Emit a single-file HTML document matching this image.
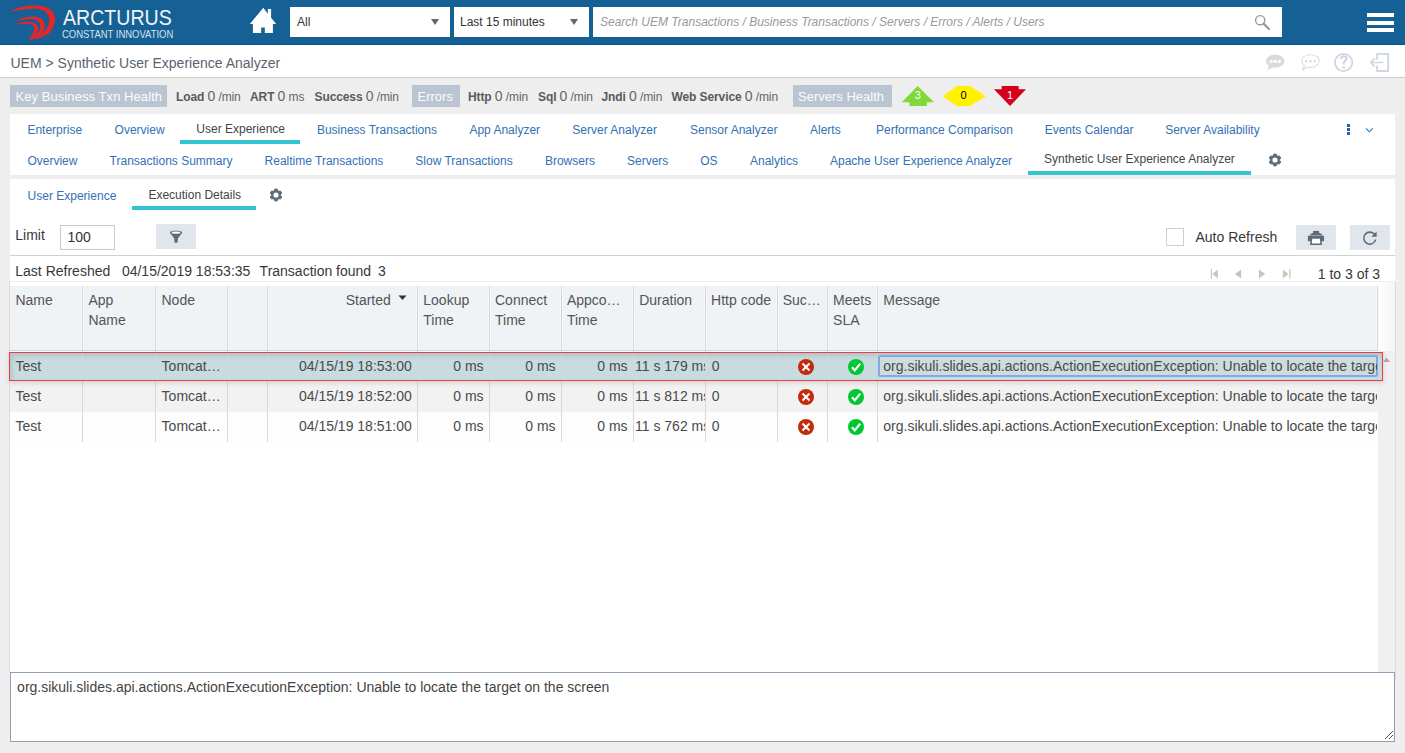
<!DOCTYPE html>
<html><head><meta charset="utf-8">
<style>
*{box-sizing:border-box;margin:0;padding:0}
html,body{width:1405px;height:753px;overflow:hidden;background:#eeeeee;font-family:"Liberation Sans",sans-serif;position:relative}
.a{position:absolute}
.t{position:absolute;line-height:1;white-space:nowrap}
#hdr{left:0;top:0;width:1405px;height:45px;background:#156195;border-bottom:1px solid #08528c}
.sel{background:#fff;height:30px;top:7px}
.crumb{left:0;top:45px;width:1405px;height:33px;background:#fff;border-bottom:1px solid #cfcbcb}
.sbox{top:85px;height:22px;background:#bbc4d1;color:#fbfcfd;font-size:13px}
.st{font-size:12px;color:#666;top:88.9px;letter-spacing:-0.1px}
.st b{color:#5a5a5a}
.st b{font-size:12px}
.panel{background:#fff}
.tab{font-size:12px;color:#3371b4}
.act{color:#454545}
.ul{background:#35c3d0;height:4px}
.lbl{font-size:14px;color:#383838}
.btn{background:#e1e5ec}
.hd{font-size:14px;color:#555}
.cell{font-size:14px;color:#4a4a4a}
.tb{position:relative;padding:0 16px;height:30px}
.tb span{display:block;line-height:1;white-space:nowrap;margin-top:10px}
.tb span.act{margin-top:8.8px}
#row2 .tb span{margin-top:9.6px}
#row2 .tb span.act{margin-top:8.3px}
.tb .ul{position:absolute;left:0;right:0;top:26px}
.vl{position:absolute;width:1px;background:#d9dcdf}
</style></head><body>
<!-- header -->
<div id="hdr" class="a">
  <svg class="a" style="left:0;top:0" width="60" height="45" viewBox="0 0 60 45"><path fill="#e8262a" d="M9.40,11.80 C11.38,11.00 17.03,8.07 21.30,7.00 C25.57,5.93 30.92,5.38 35.00,5.40 C39.08,5.42 42.90,6.07 45.80,7.10 C48.70,8.13 50.88,9.73 52.40,11.60 C53.92,13.47 54.52,16.55 54.90,18.30 C55.28,20.05 55.07,20.55 54.70,22.10 C54.33,23.65 53.50,25.90 52.70,27.60 C51.90,29.30 51.12,30.98 49.90,32.30 C48.68,33.62 47.38,34.48 45.40,35.50 C43.42,36.52 40.82,37.68 38.00,38.40 C35.18,39.12 30.08,39.57 28.50,39.80 C29.52,39.58 32.58,39.25 34.60,38.50 C36.62,37.75 39.07,36.33 40.60,35.30 C42.13,34.27 42.68,33.58 43.80,32.30 C44.92,31.02 46.40,29.30 47.30,27.60 C48.20,25.90 48.88,23.53 49.20,22.10 C49.52,20.67 49.47,20.25 49.20,19.00 C48.93,17.75 48.62,16.00 47.60,14.60 C46.58,13.20 45.20,11.63 43.10,10.60 C41.00,9.57 38.63,8.52 35.00,8.40 C31.37,8.28 25.57,9.33 21.30,9.90 C17.03,10.47 11.38,11.48 9.40,11.80Z"/><path fill="#e8262a" d="M15.30,21.00 C16.75,20.45 21.18,18.45 24.00,17.70 C26.82,16.95 29.78,16.52 32.20,16.50 C34.62,16.48 36.73,17.02 38.50,17.60 C40.27,18.18 41.83,19.10 42.80,20.00 C43.77,20.90 44.00,21.73 44.30,23.00 C44.60,24.27 44.83,26.05 44.60,27.60 C44.37,29.15 43.70,30.98 42.90,32.30 C42.10,33.62 41.20,34.45 39.80,35.50 C38.40,36.55 36.38,37.88 34.50,38.60 C32.62,39.32 29.50,39.60 28.50,39.80 C29.05,39.60 30.57,39.33 31.80,38.60 C33.03,37.87 34.80,36.45 35.90,35.40 C37.00,34.35 37.65,33.63 38.40,32.30 C39.15,30.97 40.25,28.98 40.40,27.40 C40.55,25.82 39.90,23.97 39.30,22.80 C38.70,21.63 37.98,21.02 36.80,20.40 C35.62,19.78 34.33,19.18 32.20,19.10 C30.07,19.02 26.82,19.58 24.00,19.90 C21.18,20.22 16.75,20.82 15.30,21.00Z"/><path fill="#e8262a" d="M15.00,24.60 C16.05,24.27 19.15,23.07 21.30,22.60 C23.45,22.13 25.95,21.83 27.90,21.80 C29.85,21.77 31.57,21.95 33.00,22.40 C34.43,22.85 35.63,23.63 36.50,24.50 C37.37,25.37 38.05,26.30 38.20,27.60 C38.35,28.90 37.90,30.98 37.40,32.30 C36.90,33.62 36.13,34.48 35.20,35.50 C34.27,36.52 32.92,37.68 31.80,38.40 C30.68,39.12 29.05,39.57 28.50,39.80 C28.68,39.55 29.13,39.02 29.60,38.30 C30.07,37.58 30.67,36.50 31.30,35.50 C31.93,34.50 32.88,33.45 33.40,32.30 C33.92,31.15 34.33,29.58 34.40,28.60 C34.47,27.62 34.28,27.07 33.80,26.40 C33.32,25.73 32.48,25.05 31.50,24.60 C30.52,24.15 29.60,23.82 27.90,23.70 C26.20,23.58 23.45,23.75 21.30,23.90 C19.15,24.05 16.05,24.48 15.00,24.60Z"/></svg>
  <div class="t" style="left:63px;top:6.6px;font-size:22.5px;color:#eef3f8;transform:scaleX(0.87);transform-origin:0 0">ARCTURUS</div>
  <div class="t" style="left:62px;top:29px;font-size:11px;color:#d5e1ec;transform:scaleX(0.86);transform-origin:0 0">CONSTANT INNOVATION</div>
  <svg class="a" style="left:248px;top:6px" width="30" height="29" viewBox="0 0 30 29">
    <path fill="#fff" d="M15.3,1.8 L1.9,17.9 L4.9,17.9 L4.9,27 L13.2,27 L13.2,21.5 L16.8,21.5 L16.8,27 L24.9,27 L24.9,17.9 L28.2,17.9 L23.1,11.8 L23.1,3 L19.8,3 L19.8,7.8 Z"/>
  </svg>
  <div class="a sel" style="left:290px;width:160px"></div>
  <div class="t" style="left:297px;top:16px;font-size:12px;color:#333">All</div>
  <svg class="a" style="left:431px;top:19px" width="8" height="6"><path d="M0,0 L8,0 L4,6Z" fill="#666"/></svg>
  <div class="a sel" style="left:454px;width:135px"></div>
  <div class="t" style="left:460px;top:16px;font-size:12px;color:#333">Last 15 minutes</div>
  <svg class="a" style="left:570px;top:19px" width="8" height="6"><path d="M0,0 L8,0 L4,6Z" fill="#666"/></svg>
  <div class="a sel" style="left:593px;width:689px"></div>
  <div class="t" style="left:600px;top:16px;font-size:12px;color:#999;font-style:italic">Search UEM Transactions / Business Transactions / Servers / Errors / Alerts / Users</div>
  <svg class="a" style="left:1254px;top:14px" width="17" height="17" viewBox="0 0 17 17">
    <circle cx="6.2" cy="6.2" r="4.6" fill="none" stroke="#999" stroke-width="1.4"/>
    <path d="M9.6,9.6 L15,15" stroke="#999" stroke-width="2.2" stroke-linecap="round"/>
  </svg>
  <div class="a" style="left:1367px;top:13px;width:27px;height:4px;background:#fff"></div>
  <div class="a" style="left:1367px;top:20.5px;width:27px;height:4px;background:#fff"></div>
  <div class="a" style="left:1367px;top:28px;width:27px;height:4px;background:#fff"></div>
</div>
<!-- breadcrumb -->
<div class="a crumb"></div>
<div class="t" style="left:10.5px;top:56px;font-size:14px;color:#5a6270">UEM &gt; Synthetic User Experience Analyzer</div>


<!-- breadcrumb icons -->
<svg class="a" style="left:1260px;top:48px" width="140" height="28" viewBox="1260 48 140 28">
 <g fill="#dadada">
  <ellipse cx="1275.2" cy="61.1" rx="9.2" ry="6.6"/>
  <path d="M1269,65 L1267.3,70.2 L1274,66.8 Z"/>
 </g>
 <g fill="#fff"><circle cx="1271.2" cy="61.3" r="1.6"/><circle cx="1275.2" cy="61.3" r="1.6"/><circle cx="1279.3" cy="61.3" r="1.6"/></g>
 <path d="M1304.5,65.5 C1301,63 1301.1,58.5 1304,56.6 C1308,53.8 1314.5,54.2 1317.5,57 C1320.5,59.8 1319.5,64.5 1315,66.6 C1312.5,67.7 1309,67.8 1306.5,67.2 L1302.3,70.3 Z" fill="none" stroke="#dedede" stroke-width="1.1"/>
 <g fill="#cfcfcf"><circle cx="1306.2" cy="61.3" r="1.1"/><circle cx="1310.5" cy="61.3" r="1.1"/><circle cx="1314.7" cy="61.3" r="1.1"/></g>
 <circle cx="1343.6" cy="62.5" r="8.7" fill="none" stroke="#cdd6e2" stroke-width="1.8"/>
 <path d="M1340.8,58.8 C1341,56.8 1342.2,56.2 1343.7,56.2 C1345.5,56.2 1346.6,57.3 1346.6,58.6 C1346.6,60.6 1343.7,61 1343.6,63.6 L1343.6,64.6" fill="none" stroke="#cdd6e2" stroke-width="2"/>
 <rect x="1342.3" y="66.6" width="2.6" height="1.8" fill="#cdd6e2"/>
 <path d="M1377.1,59.7 L1377.1,53.8 L1388.2,53.8 L1388.2,71 L1377.1,71 L1377.1,65.3" fill="none" stroke="#cdd6e2" stroke-width="1.8"/>
 <path d="M1383.2,62.5 L1371,62.5 M1374.8,58.4 L1370.8,62.5 L1374.8,66.6" fill="none" stroke="#cdd6e2" stroke-width="1.7"/>
</svg>
<!-- stats -->
<div class="a sbox" style="left:10px;width:157px"></div>
<div class="t" style="left:15.5px;top:89.7px;font-size:13px;color:#fbfcfd;letter-spacing:0.07px">Key Business Txn Health</div>
<div class="t st" style="left:176px"><b>Load</b> <span style="font-size:14px">0</span> /min</div>
<div class="t st" style="left:250px"><b>ART</b> <span style="font-size:14px">0</span> ms</div>
<div class="t st" style="left:314.5px"><b>Success</b> <span style="font-size:14px">0</span> /min</div>
<div class="a sbox" style="left:412px;width:48px"></div>
<div class="t" style="left:417.5px;top:89.7px;font-size:13px;color:#fbfcfd">Errors</div>
<div class="t st" style="left:468px"><b>Http</b> <span style="font-size:14px">0</span> /min</div>
<div class="t st" style="left:538px"><b>Sql</b> <span style="font-size:14px">0</span> /min</div>
<div class="t st" style="left:601.5px"><b>Jndi</b> <span style="font-size:14px">0</span> /min</div>
<div class="t st" style="left:671.5px"><b>Web Service</b> <span style="font-size:14px">0</span> /min</div>
<div class="a sbox" style="left:793px;width:99px"></div>
<div class="t" style="left:798px;top:89.7px;font-size:13px;color:#fbfcfd">Servers Health</div>
<svg class="a" style="left:900px;top:84px" width="130" height="24" viewBox="900 84 130 24">
  <path fill="#7fd93a" d="M917.7,86 L934,102.3 L926.8,102.3 L926.8,106 L909.5,106 L909.5,102.3 L901.8,102.3 Z"/>
  <path fill="#fff200" d="M957,86 L970,86 L986,96.3 L970,106 L957,106 L942.8,96.3 Z"/>
  <path fill="#d7001c" d="M1001.7,86 L1018.6,86 L1018.6,89.3 L1026,89.3 L1010,106 L994,89.3 L1001.7,89.3 Z"/>
  <text x="917.7" y="98.5" font-size="11" fill="#fff" text-anchor="middle" font-family="Liberation Sans">3</text>
  <text x="963.5" y="98.5" font-size="11" fill="#000" text-anchor="middle" font-family="Liberation Sans">0</text>
  <text x="1010" y="98.5" font-size="11" fill="#fff" text-anchor="middle" font-family="Liberation Sans">1</text>
</svg>

<!-- panel 1 tabs -->
<div class="a panel" style="left:10px;top:114px;width:1385px;height:61px"></div>
<div id="tabs">
<div class="t tab" style="left:27.4px;top:124px">Enterprise</div>
<div class="t tab" style="left:114.6px;top:124px">Overview</div>
<div class="t tab act" style="left:196.3px;top:122.8px">User Experience</div>
<div class="t tab" style="left:316.9px;top:124px">Business Transactions</div>
<div class="t tab" style="left:469.4px;top:124px">App Analyzer</div>
<div class="t tab" style="left:572.3px;top:124px">Server Analyzer</div>
<div class="t tab" style="left:690px;top:124px">Sensor Analyzer</div>
<div class="t tab" style="left:810px;top:124px">Alerts</div>
<div class="t tab" style="left:876.1px;top:124px">Performance Comparison</div>
<div class="t tab" style="left:1044.7px;top:124px">Events Calendar</div>
<div class="t tab" style="left:1165.2px;top:124px">Server Availability</div>
<div class="t tab" style="left:27.4px;top:154.6px">Overview</div>
<div class="t tab" style="left:109.6px;top:154.6px">Transactions Summary</div>
<div class="t tab" style="left:264.6px;top:154.6px">Realtime Transactions</div>
<div class="t tab" style="left:415.3px;top:154.6px">Slow Transactions</div>
<div class="t tab" style="left:544.9px;top:154.6px">Browsers</div>
<div class="t tab" style="left:627px;top:154.6px">Servers</div>
<div class="t tab" style="left:700.2px;top:154.6px">OS</div>
<div class="t tab" style="left:750px;top:154.6px">Analytics</div>
<div class="t tab" style="left:830px;top:154.6px">Apache User Experience Analyzer</div>
<div class="t tab act" style="left:1044.1px;top:153.3px">Synthetic User Experience Analyzer</div>
<div class="a ul" style="left:180px;top:140px;width:120px"></div>
<div class="a ul" style="left:1028px;top:171px;width:223px"></div>
</div>
<!-- panel 2 -->
<div class="a panel" style="left:10px;top:179px;width:1385px;height:494px"></div>

<!-- panel1 right icons -->
<div class="a" style="left:1347px;top:124px;width:3px;height:3px;background:#2562b0"></div>
<div class="a" style="left:1347px;top:128px;width:3px;height:3px;background:#2562b0"></div>
<div class="a" style="left:1347px;top:132px;width:3px;height:3px;background:#2562b0"></div>
<svg class="a" style="left:1365px;top:126px" width="9" height="8" viewBox="0 0 9 8"><path d="M1,2.3 L4.4,5.8 L7.8,2.3" fill="none" stroke="#2f74c4" stroke-width="1.1"/></svg>
<svg class="a" style="left:1267px;top:152px" width="16" height="16" viewBox="-8 -8 16 16"><path d="M-1.87,-4.20 L-1.14,-5.89 L1.14,-5.89 L1.87,-4.20 L2.70,-3.72 L4.53,-3.94 L5.67,-1.95 L4.57,-0.48 L4.57,0.48 L5.67,1.95 L4.53,3.94 L2.70,3.72 L1.87,4.20 L1.14,5.89 L-1.14,5.89 L-1.87,4.20 L-2.70,3.72 L-4.53,3.94 L-5.67,1.95 L-4.57,0.48 L-4.57,-0.48 L-5.67,-1.95 L-4.53,-3.94 L-2.70,-3.72Z" fill="#5f6b7a" stroke="#5f6b7a" stroke-width="1" stroke-linejoin="round"/><circle r="2.6" fill="#fff"/></svg>

<!-- panel 2 content -->
<div class="t tab" style="left:27.6px;top:189.5px">User Experience</div>
<div class="t tab act" style="left:148.4px;top:188.8px">Execution Details</div>
<div class="a ul" style="left:132px;top:206px;width:124px"></div>
<svg class="a" style="left:268px;top:187px" width="16" height="16" viewBox="-8 -8 16 16"><path d="M-1.87,-4.20 L-1.14,-5.89 L1.14,-5.89 L1.87,-4.20 L2.70,-3.72 L4.53,-3.94 L5.67,-1.95 L4.57,-0.48 L4.57,0.48 L5.67,1.95 L4.53,3.94 L2.70,3.72 L1.87,4.20 L1.14,5.89 L-1.14,5.89 L-1.87,4.20 L-2.70,3.72 L-4.53,3.94 L-5.67,1.95 L-4.57,0.48 L-4.57,-0.48 L-5.67,-1.95 L-4.53,-3.94 L-2.70,-3.72Z" fill="#5f6b7a" stroke="#5f6b7a" stroke-width="1" stroke-linejoin="round"/><circle r="2.6" fill="#fff"/></svg>
<div class="t lbl" style="left:15.3px;top:228.2px">Limit</div>
<div class="a" style="left:60px;top:225px;width:55px;height:25px;border:1px solid #c9c9c9;background:#fff"></div>
<div class="t lbl" style="left:67.5px;top:229.6px;color:#333">100</div>
<div class="a btn" style="left:156px;top:224px;width:40px;height:25px"></div>
<svg class="a" style="left:166px;top:228px" width="20" height="18" viewBox="166 228 20 18">
 <path fill="#5f6b7a" d="M169.9,232.8 C169.9,230.2 182.2,230.2 182.2,232.8 L177.8,238.6 L177.8,241.2 C177.8,243.4 174.3,243.4 174.3,241.2 L174.3,238.6 Z"/>
 <ellipse cx="176" cy="232.7" rx="4.4" ry="1.15" fill="#fff"/>
</svg>
<div class="a" style="left:1166px;top:228px;width:18px;height:18px;border:1px solid #cfcfcf;background:#fff"></div>
<div class="t lbl" style="left:1195.5px;top:230.3px">Auto Refresh</div>
<div class="a btn" style="left:1296px;top:225px;width:40px;height:25px"></div>
<svg class="a" style="left:1305px;top:229px" width="22" height="18" viewBox="1305 229 22 18">
 <g fill="#5f6b7a">
 <rect x="1313.1" y="230.9" width="6" height="2.4"/>
 <path d="M1309.6,235.4 C1310.5,233.6 1312.5,232.8 1314,232.8 L1318.2,232.8 C1319.7,232.8 1321.8,233.6 1322.6,235.4 Z"/>
 <rect x="1307.9" y="235.8" width="16.1" height="5.4"/>
 <path d="M1310,245.1 L1310.9,237.7 L1321.4,237.7 L1322,245.1 Z"/>
 </g>
 <path d="M1311.8,243.6 L1312.3,238.8 L1319.9,238.8 L1320.3,243.6 Z" fill="#fff"/>
</svg>
<div class="a btn" style="left:1350px;top:225px;width:40px;height:25px"></div>
<svg class="a" style="left:1362px;top:230px" width="16" height="16" viewBox="0 0 16 16">
 <path d="M12.6,4.6 A6,6 0 1 0 13.6,9.6" fill="none" stroke="#5f6b7a" stroke-width="1.6"/>
 <path d="M14.6,1.5 L14.6,6.8 L9.3,6.8 Z" fill="#5f6b7a"/>
</svg>
<div class="a" style="left:10px;top:255px;width:1385px;height:1px;background:#d0d0d0"></div>
<div class="t lbl" style="left:15.3px;top:264.1px">Last Refreshed</div>
<div class="t lbl" style="left:121.9px;top:264.1px">04/15/2019 18:53:35</div>
<div class="t lbl" style="left:259.6px;top:264.1px">Transaction found</div>
<div class="t lbl" style="left:378px;top:264.1px">3</div>
<svg class="a" style="left:1205px;top:266px" width="90" height="16" viewBox="1205 266 90 16">
 <g fill="#c9c5bd">
 <rect x="1210.8" y="269" width="1.2" height="9.6"/><path d="M1217.9,269.4 L1217.9,278.4 L1212.4,273.9 Z"/>
 <path d="M1241.2,269.4 L1241.2,278.4 L1234.9,273.9 Z"/>
 <path d="M1259,269.4 L1259,278.4 L1265.2,273.9 Z"/>
 <path d="M1282.9,269.4 L1282.9,278.4 L1288.6,273.9 Z"/><rect x="1289.3" y="269" width="1.2" height="9.6"/>
 </g>
</svg>
<div class="t lbl" style="left:1317.8px;top:266.6px">1 to 3 of 3</div>

<!-- grid -->
<div class="a" style="left:9px;top:282px;width:1px;height:390px;background:#dcdcdc"></div>
<div class="a" style="left:1395px;top:282px;width:1px;height:398px;background:#dcdcdc"></div>

<div class="a" style="left:10px;top:281px;width:1385px;height:1px;background:#eeeeee"></div>
<div class="a" style="left:10px;top:286px;width:1368px;height:64px;background:#eff3f6"></div>
<div class="a" style="left:1378px;top:282px;width:17px;height:69px;background:linear-gradient(90deg,#ffffff,#f4f4f4)"></div>
<div class="a" style="left:10px;top:350px;width:1368px;height:1px;background:#d6d6d6"></div>
<div class="a" style="left:1378px;top:351px;width:17px;height:321px;background:#f0f0f0"></div>
<div class="a" style="left:10px;top:381px;width:1368px;height:31px;background:#f2f2f2"></div>
<div class="a" style="left:10px;top:412px;width:1368px;height:30px;background:#fdfdfd"></div>
<div class="vl" style="left:82px;top:286px;height:64px;background:#d5d5d5;box-shadow:-1px 0 0 #f6f8fa,1px 0 0 #f6f8fa"></div>
<div class="vl" style="left:82px;top:351px;height:91px;background:#d9d9d9"></div>
<div class="vl" style="left:155px;top:286px;height:64px;background:#d5d5d5;box-shadow:-1px 0 0 #f6f8fa,1px 0 0 #f6f8fa"></div>
<div class="vl" style="left:155px;top:351px;height:91px;background:#d9d9d9"></div>
<div class="vl" style="left:227px;top:286px;height:64px;background:#d5d5d5;box-shadow:-1px 0 0 #f6f8fa,1px 0 0 #f6f8fa"></div>
<div class="vl" style="left:227px;top:351px;height:91px;background:#d9d9d9"></div>
<div class="vl" style="left:267px;top:286px;height:64px;background:#d5d5d5;box-shadow:-1px 0 0 #f6f8fa,1px 0 0 #f6f8fa"></div>
<div class="vl" style="left:267px;top:351px;height:91px;background:#d9d9d9"></div>
<div class="vl" style="left:417px;top:286px;height:64px;background:#d5d5d5;box-shadow:-1px 0 0 #f6f8fa,1px 0 0 #f6f8fa"></div>
<div class="vl" style="left:417px;top:351px;height:91px;background:#d9d9d9"></div>
<div class="vl" style="left:489px;top:286px;height:64px;background:#d5d5d5;box-shadow:-1px 0 0 #f6f8fa,1px 0 0 #f6f8fa"></div>
<div class="vl" style="left:489px;top:351px;height:91px;background:#d9d9d9"></div>
<div class="vl" style="left:561px;top:286px;height:64px;background:#d5d5d5;box-shadow:-1px 0 0 #f6f8fa,1px 0 0 #f6f8fa"></div>
<div class="vl" style="left:561px;top:351px;height:91px;background:#d9d9d9"></div>
<div class="vl" style="left:633px;top:286px;height:64px;background:#d5d5d5;box-shadow:-1px 0 0 #f6f8fa,1px 0 0 #f6f8fa"></div>
<div class="vl" style="left:633px;top:351px;height:91px;background:#d9d9d9"></div>
<div class="vl" style="left:705px;top:286px;height:64px;background:#d5d5d5;box-shadow:-1px 0 0 #f6f8fa,1px 0 0 #f6f8fa"></div>
<div class="vl" style="left:705px;top:351px;height:91px;background:#d9d9d9"></div>
<div class="vl" style="left:777px;top:286px;height:64px;background:#d5d5d5;box-shadow:-1px 0 0 #f6f8fa,1px 0 0 #f6f8fa"></div>
<div class="vl" style="left:777px;top:351px;height:91px;background:#d9d9d9"></div>
<div class="vl" style="left:827px;top:286px;height:64px;background:#d5d5d5;box-shadow:-1px 0 0 #f6f8fa,1px 0 0 #f6f8fa"></div>
<div class="vl" style="left:827px;top:351px;height:91px;background:#d9d9d9"></div>
<div class="vl" style="left:877px;top:286px;height:64px;background:#d5d5d5;box-shadow:-1px 0 0 #f6f8fa,1px 0 0 #f6f8fa"></div>
<div class="vl" style="left:877px;top:351px;height:91px;background:#d9d9d9"></div>
<div class="vl" style="left:1377px;top:286px;height:64px;background:#d5d5d5;box-shadow:-1px 0 0 #f6f8fa,1px 0 0 #f6f8fa"></div>
<div class="a" style="left:9px;top:352px;width:1374px;height:29px;border:1px solid #f03c44;background:#c8dbdf;box-shadow:inset 2px 3px 4px rgba(40,60,70,0.14),0 2px 5px rgba(0,0,0,0.13)"></div>
<div class="vl" style="left:82px;top:353px;height:27px;background:#cfd6d8"></div>
<div class="vl" style="left:155px;top:353px;height:27px;background:#cfd6d8"></div>
<div class="vl" style="left:227px;top:353px;height:27px;background:#cfd6d8"></div>
<div class="vl" style="left:267px;top:353px;height:27px;background:#cfd6d8"></div>
<div class="vl" style="left:417px;top:353px;height:27px;background:#cfd6d8"></div>
<div class="vl" style="left:489px;top:353px;height:27px;background:#cfd6d8"></div>
<div class="vl" style="left:561px;top:353px;height:27px;background:#cfd6d8"></div>
<div class="vl" style="left:633px;top:353px;height:27px;background:#cfd6d8"></div>
<div class="vl" style="left:705px;top:353px;height:27px;background:#cfd6d8"></div>
<div class="vl" style="left:777px;top:353px;height:27px;background:#cfd6d8"></div>
<div class="vl" style="left:827px;top:353px;height:27px;background:#cfd6d8"></div>
<div class="vl" style="left:877px;top:353px;height:27px;background:#cfd6d8"></div>
<div class="a" style="left:878px;top:355px;width:500px;height:22px;border:2px solid #80aae6;border-radius:2px;background:#cddcdd"></div>
<div class="t hd" style="left:15.4px;top:293.34999999999997px;">Name</div>
<div class="t hd" style="left:88.4px;top:293.34999999999997px;">App</div>
<div class="t hd" style="left:88.4px;top:313.34999999999997px;">Name</div>
<div class="t hd" style="left:161.5px;top:293.34999999999997px;">Node</div>
<div class="t hd" style="right:1014.2px;top:293.34999999999997px">Started</div>
<svg class="a" style="left:398px;top:295px" width="9" height="6"><path d="M0.5,0.6 L8.5,0.6 L4.5,5Z" fill="#333"/></svg>
<div class="t hd" style="left:423.3px;top:293.34999999999997px;">Lookup</div>
<div class="t hd" style="left:423.3px;top:313.34999999999997px;">Time</div>
<div class="t hd" style="left:495px;top:293.34999999999997px;">Connect</div>
<div class="t hd" style="left:495px;top:313.34999999999997px;">Time</div>
<div class="t hd" style="left:566.9px;top:293.34999999999997px;">Appco…</div>
<div class="t hd" style="left:566.9px;top:313.34999999999997px;">Time</div>
<div class="t hd" style="left:639.2px;top:293.34999999999997px;">Duration</div>
<div class="t hd" style="left:711.1px;top:293.34999999999997px;">Http code</div>
<div class="t hd" style="left:782.7px;top:293.34999999999997px;">Suc…</div>
<div class="t hd" style="left:833.1px;top:293.34999999999997px;">Meets</div>
<div class="t hd" style="left:833.1px;top:313.34999999999997px;">SLA</div>
<div class="t hd" style="left:883.3px;top:293.34999999999997px;">Message</div>
<div class="t cell" style="left:15.4px;top:358.95px">Test</div>
<div class="t cell" style="left:161.6px;top:358.95px">Tomcat…</div>
<div class="t cell" style="right:993.2px;top:358.95px">04/15/19 18:53:00</div>
<div class="t cell" style="right:921.4px;top:358.95px">0 ms</div>
<div class="t cell" style="right:849.4px;top:358.95px">0 ms</div>
<div class="t cell" style="right:777.4px;top:358.95px">0 ms</div>
<div class="a" style="left:634px;top:355.95px;width:71px;height:20px;overflow:hidden"><div class="t cell" style="left:1px;top:3px">11 s 179 ms</div></div>
<div class="t cell" style="left:711.7px;top:358.95px">0</div>
<svg class="a" style="left:797px;top:357.7px" width="18" height="18" viewBox="-9 -9 18 18"><circle r="8" fill="#c42a0c"/><path d="M-3.5,-3.5 L3.5,3.5 M3.5,-3.5 L-3.5,3.5" stroke="#fff" stroke-width="2"/></svg>
<svg class="a" style="left:847px;top:357.7px" width="18" height="18" viewBox="-9 -9 18 18"><circle r="8" fill="#00c832"/><path d="M-4,0.2 L-1.2,3.4 L4.2,-3.4" fill="none" stroke="#fff" stroke-width="2.2"/></svg>
<div class="a" style="left:878px;top:355.95px;width:499px;height:20px;overflow:hidden"><div class="t cell" style="left:5.3px;top:3px">org.sikuli.slides.api.actions.ActionExecutionException: Unable to locate the target on the screen</div></div>
<div class="t cell" style="left:15.4px;top:388.84999999999997px">Test</div>
<div class="t cell" style="left:161.6px;top:388.84999999999997px">Tomcat…</div>
<div class="t cell" style="right:993.2px;top:388.84999999999997px">04/15/19 18:52:00</div>
<div class="t cell" style="right:921.4px;top:388.84999999999997px">0 ms</div>
<div class="t cell" style="right:849.4px;top:388.84999999999997px">0 ms</div>
<div class="t cell" style="right:777.4px;top:388.84999999999997px">0 ms</div>
<div class="a" style="left:634px;top:385.84999999999997px;width:71px;height:20px;overflow:hidden"><div class="t cell" style="left:1px;top:3px">11 s 812 ms</div></div>
<div class="t cell" style="left:711.7px;top:388.84999999999997px">0</div>
<svg class="a" style="left:797px;top:387.59999999999997px" width="18" height="18" viewBox="-9 -9 18 18"><circle r="8" fill="#c42a0c"/><path d="M-3.5,-3.5 L3.5,3.5 M3.5,-3.5 L-3.5,3.5" stroke="#fff" stroke-width="2"/></svg>
<svg class="a" style="left:847px;top:387.59999999999997px" width="18" height="18" viewBox="-9 -9 18 18"><circle r="8" fill="#00c832"/><path d="M-4,0.2 L-1.2,3.4 L4.2,-3.4" fill="none" stroke="#fff" stroke-width="2.2"/></svg>
<div class="a" style="left:878px;top:385.84999999999997px;width:499px;height:20px;overflow:hidden"><div class="t cell" style="left:5.3px;top:3px">org.sikuli.slides.api.actions.ActionExecutionException: Unable to locate the target on the screen</div></div>
<div class="t cell" style="left:15.4px;top:418.75px">Test</div>
<div class="t cell" style="left:161.6px;top:418.75px">Tomcat…</div>
<div class="t cell" style="right:993.2px;top:418.75px">04/15/19 18:51:00</div>
<div class="t cell" style="right:921.4px;top:418.75px">0 ms</div>
<div class="t cell" style="right:849.4px;top:418.75px">0 ms</div>
<div class="t cell" style="right:777.4px;top:418.75px">0 ms</div>
<div class="a" style="left:634px;top:415.75px;width:71px;height:20px;overflow:hidden"><div class="t cell" style="left:1px;top:3px">11 s 762 ms</div></div>
<div class="t cell" style="left:711.7px;top:418.75px">0</div>
<svg class="a" style="left:797px;top:417.5px" width="18" height="18" viewBox="-9 -9 18 18"><circle r="8" fill="#c42a0c"/><path d="M-3.5,-3.5 L3.5,3.5 M3.5,-3.5 L-3.5,3.5" stroke="#fff" stroke-width="2"/></svg>
<svg class="a" style="left:847px;top:417.5px" width="18" height="18" viewBox="-9 -9 18 18"><circle r="8" fill="#00c832"/><path d="M-4,0.2 L-1.2,3.4 L4.2,-3.4" fill="none" stroke="#fff" stroke-width="2.2"/></svg>
<div class="a" style="left:878px;top:415.75px;width:499px;height:20px;overflow:hidden"><div class="t cell" style="left:5.3px;top:3px">org.sikuli.slides.api.actions.ActionExecutionException: Unable to locate the target on the screen</div></div>
<svg class="a" style="left:1382px;top:356px" width="9" height="7"><path d="M1,6 L8,6 L4.5,1.5Z" fill="#a9a9a9"/></svg>
<div class="a" style="left:10px;top:672px;width:1385px;height:70px;border:1px solid #8fa0b4;background:#fff"></div>
<div class="t cell" style="left:17.1px;top:679.9px;color:#444">org.sikuli.slides.api.actions.ActionExecutionException: Unable to locate the target on the screen</div>
<svg class="a" style="left:1384px;top:730px" width="10" height="10"><path d="M1,9 L9,1 M5,9 L9,5" stroke="#555" stroke-width="1"/></svg>
</body></html>
